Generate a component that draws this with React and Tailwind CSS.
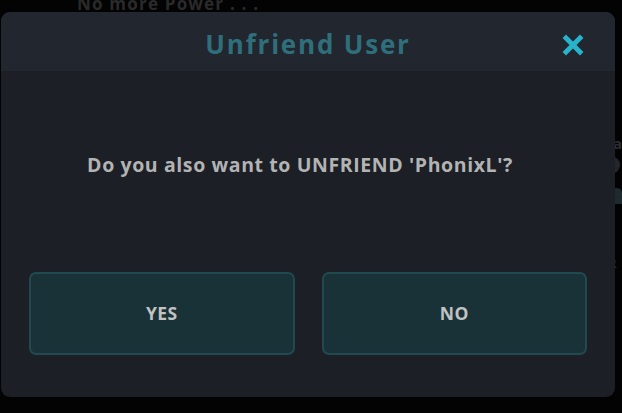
import { X } from "lucide-react";

export default function App() {
  return (
    <div
      className="relative w-[622px] h-[413px] overflow-hidden bg-[#030303] pt-[12px] pl-[1px]"
      style={{ fontFamily: '"Open Sans", "DejaVu Sans", sans-serif' }}
    >
      {/* dimmed page behind the dialog */}
      <div className="absolute left-[77px] -top-[9px] text-[17px] font-bold tracking-[1.2px] text-[#2a2a2a]">
        No more Power . . .
      </div>
      <div className="absolute left-[613px] top-[132px] text-[15px] font-bold text-[#2a2e33]">a</div>
      <div className="absolute left-[602px] top-[156px] w-[18px] h-[18px] rounded-full bg-[#23272c]" />
      <div className="absolute left-[612px] top-[188px] w-[10px] h-[16px] rounded-t-full bg-[#1d2a2e]" />
      <div className="absolute left-[608px] top-[254px] text-[13px] font-bold text-[#252a30]">R</div>

      <div className="relative z-10 w-[614px] h-[385px] rounded-[9px] bg-[#1c1f26] overflow-hidden flex flex-col">
        <div className="relative h-[59px] shrink-0 bg-[#22262e] flex items-center justify-center">
          <h2 className="pt-[5px] text-[26px] font-bold tracking-[1.8px] text-[#2f6f7b] leading-none">
            Unfriend User
          </h2>
          <button className="absolute right-[28px] top-[19px] text-[#27b3cb]">
            <X size={28} strokeWidth={4.2} strokeLinecap="square" />
          </button>
        </div>

        <div className="flex-1 flex flex-col px-[28px]">
          <p className="mt-[84px] pr-[16px] text-center text-[19.5px] font-bold tracking-[0.6px] text-[#b3b3b3] leading-none">
            Do you also want to UNFRIEND 'PhonixL'?
          </p>
          <div className="mt-[97px] flex gap-[27px]">
            <button className="flex-1 h-[83px] rounded-[7px] border-2 border-[#204a50] bg-[#193237] text-[17.5px] font-bold tracking-[0.3px] text-[#c2c2c2]">
              YES
            </button>
            <button className="flex-1 h-[83px] rounded-[7px] border-2 border-[#204a50] bg-[#193237] text-[17.5px] font-bold tracking-[0.3px] text-[#c2c2c2]">
              NO
            </button>
          </div>
        </div>
      </div>
    </div>
  );
}
